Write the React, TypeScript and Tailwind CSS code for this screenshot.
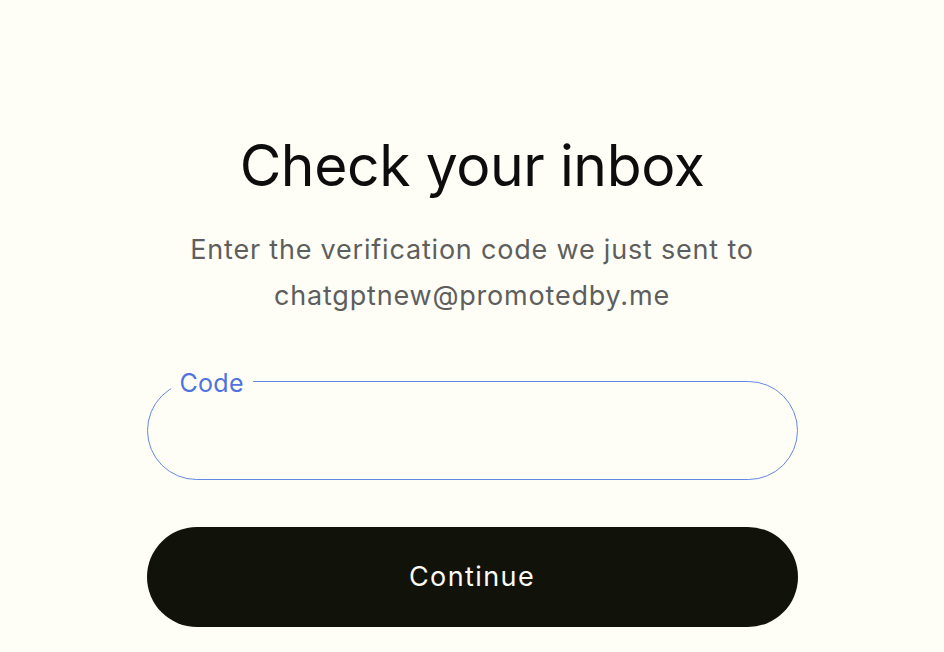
export default function App() {
  return (
    <div
      className="min-h-screen w-full bg-[#fefef6] flex flex-col items-center pt-[128px]"
      style={{ fontFamily: "Inter, 'Liberation Sans', sans-serif" }}
    >
      <h1 className="text-[57px] leading-[76px] text-[#0d0d0d] tracking-[-0.4px]">Check your inbox</h1>
      <p className="mt-[23px] text-center text-[27px] leading-[46px] tracking-[0.8px] text-[#5e5e5e]">
        Enter the verification code we just sent to
        <br />
        chatgptnew@promotedby.me
      </p>

      <div className="relative mt-[62px] w-[651px]">
        <input
          className="h-[99px] w-full rounded-full border border-[#6787e6] bg-transparent px-8 text-[24px] outline-none"
          aria-label="Code"
        />
        {/* floating label sitting on the top border */}
        <span className="absolute left-[24px] top-[-13px] bg-[#fefef6] px-[9px] text-[25px] leading-[30px] tracking-[0.3px] text-[#4f72e0]">
          Code
        </span>
      </div>

      <button className="mt-[47px] h-[100px] w-[651px] rounded-full bg-[#11120a] text-[27px] tracking-[1.4px] text-[#fbfbf3]">
        Continue
      </button>
    </div>
  );
}
